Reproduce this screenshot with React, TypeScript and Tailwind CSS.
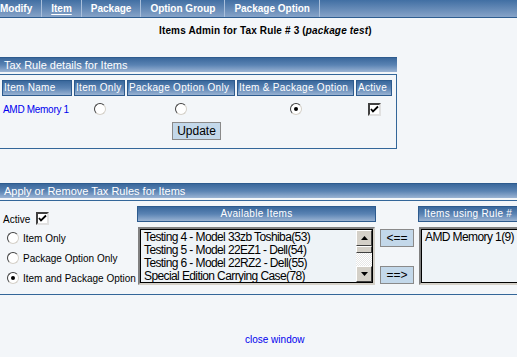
import React from "react";

const bar = "bg-gradient-to-b from-[#3a689c] via-[#5a83b3] to-[#9ab3d3]";

function Radio({ checked }: { checked?: boolean }) {
  return (
    <span className="inline-flex w-[12px] h-[12px] rounded-full bg-white border border-t-[#404040] border-l-[#404040] border-r-[#d4d0c8] border-b-[#d4d0c8] items-center justify-center">
      {checked && <span className="w-[4px] h-[4px] rounded-full bg-black" />}
    </span>
  );
}

function Check() {
  return (
    <span className="inline-flex w-[13px] h-[13px] bg-white border-2 border-t-[#404040] border-l-[#404040] border-r-[#e0e0e0] border-b-[#e0e0e0] items-center justify-center">
      <svg width="9" height="9" viewBox="0 0 9 9">
        <path d="M1 4 L3 6.5 L8 1.5" stroke="black" strokeWidth="1.8" fill="none" />
      </svg>
    </span>
  );
}

function HeadCell({ children, w }: { children: React.ReactNode; w: string }) {
  return (
    <div className={`${w} h-[16px] ${bar} border border-[#2d5b8e] text-white text-[10px] leading-[14px] px-[1px] whitespace-nowrap tracking-[0.3px] overflow-hidden`}>
      {children}
    </div>
  );
}

function Btn({ children, w }: { children: React.ReactNode; w: string }) {
  return (
    <div className={`${w} h-[18px] bg-[#c3d8ea] border border-[#8a8a8a] text-[12px] leading-[16px] text-center text-black`}>
      {children}
    </div>
  );
}

const cols = ["w-[70px]", "w-[51px]", "w-[108px]", "w-[117px]", "w-[36px]"];

export default function App() {
  const nav = ["Modify", "Item", "Package", "Option Group", "Package Option"];
  return (
    <div className="w-[517px] h-[357px] overflow-hidden bg-[#f3f6f9] text-black" style={{ fontFamily: '"Liberation Sans", Arial, sans-serif' }}>
      {/* top nav */}
      <div className="h-[18px] bg-gradient-to-b from-[#416fa3] to-[#86a3c8] border-b border-[#2e5d90] flex items-center -ml-[9px]">
        {nav.map((n, i) => (
          <div key={i} className="flex items-center h-full border-r border-[#a9bfdb]">
            <span className={`px-[9px] text-[10px] font-bold text-white ${n === "Item" ? "underline underline-offset-2" : ""}`}>{n}</span>
          </div>
        ))}
      </div>

      {/* title */}
      <div className="pl-[159px] pt-[6px] text-[10px] font-bold leading-[14px] tracking-[0.15px]">
        Items Admin for Tax Rule # 3 (<i>package test</i>)
      </div>

      {/* section 1 */}
      <div className="mt-[19px] w-[397px]">
        <div className={`h-[15px] ${bar} border-t border-[#2d5b8e] text-white text-[11px] leading-[14px] pl-[4px]`}>Tax Rule details for Items</div>
        <div className="mt-[2px] h-[75px] border border-[#336699] border-l-0">
          <div className="flex gap-[2px] pl-[2px] pt-[5px]">
            <HeadCell w={cols[0]}>Item Name</HeadCell>
            <HeadCell w={cols[1]}>Item Only</HeadCell>
            <HeadCell w={cols[2]}>Package Option Only</HeadCell>
            <HeadCell w={cols[3]}>Item &amp; Package Option</HeadCell>
            <HeadCell w={cols[4]}>Active</HeadCell>
          </div>
          <div className="flex gap-[2px] items-center h-[26px] pl-[2px]">
            <span className={`${cols[0]} pl-[1px] text-[10px] tracking-[-0.3px] text-[#0000ee] whitespace-nowrap`}>AMD Memory 1</span>
            <span className={`${cols[1]} flex justify-center`}><Radio /></span>
            <span className={`${cols[2]} flex justify-center`}><Radio /></span>
            <span className={`${cols[3]} flex justify-center`}><Radio checked /></span>
            <span className={`${cols[4]} flex justify-center`}><Check /></span>
          </div>
          <div className="pl-[172px]">
            <Btn w="w-[49px]">Update</Btn>
          </div>
        </div>
      </div>

      {/* section 2 */}
      <div className="mt-[34px]">
        <div className={`h-[15px] ${bar} border-t border-[#2d5b8e] text-white text-[11px] leading-[14px] pl-[4px]`}>Apply or Remove Tax Rules for Items</div>
        <div className="mt-[2px] h-[95px] border-t border-b border-[#336699] flex">
          <div className="w-[137px] shrink-0 pt-[10px] text-[10px] whitespace-nowrap">
            <div className="flex items-end gap-[6px] pl-[3px] h-[14px]">
              <span className="leading-[11px]">Active</span>
              <Check />
            </div>
            <div className="flex flex-col gap-[8px] mt-[7px] pl-[7px]">
              <div className="flex items-center gap-[4px] h-[12px]"><Radio /><span>Item Only</span></div>
              <div className="flex items-center gap-[4px] h-[12px]"><Radio /><span>Package Option Only</span></div>
              <div className="flex items-center gap-[4px] h-[12px]"><Radio checked /><span>Item and Package Option</span></div>
            </div>
          </div>
          <div className="pt-[5px] shrink-0">
            <div className={`w-[239px] h-[16px] ${bar} border border-[#2d5b8e] text-white text-[10px] tracking-[0.3px] leading-[14px] text-center`}>Available Items</div>
            <div className="mt-[5px] ml-[1px] w-[237px] h-[58px] bg-[#eef3f7] border-2 border-t-[#808080] border-l-[#808080] border-r-[#d4d0c8] border-b-[#d4d0c8] flex">
              <div className="flex-1 text-[12px] tracking-[-0.6px] leading-[13px] pl-[3px] pt-[1px] whitespace-nowrap overflow-hidden border border-black border-r-0">
                <div>Testing 4 - Model 33zb Toshiba(53)</div>
                <div>Testing 5 - Model 22EZ1 - Dell(54)</div>
                <div>Testing 6 - Model 22RZ2 - Dell(55)</div>
                <div>Special Edition Carrying Case(78)</div>
              </div>
              <div className="w-[17px] flex flex-col bg-[repeating-conic-gradient(#e6e6e6_0%_25%,#ffffff_0%_50%)] bg-[length:2px_2px] border border-black border-l-0">
                <div className="h-[16px] bg-[#d4d0c8] border border-t-white border-l-white border-r-[#404040] border-b-[#404040] flex items-center justify-center">
                  <svg width="7" height="4" viewBox="0 0 7 4"><path d="M3.5 0 L7 4 L0 4Z" fill="black" /></svg>
                </div>
                <div className="h-[7px] bg-[#d4d0c8] border border-t-white border-l-white border-r-[#404040] border-b-[#404040]" />
                <div className="flex-1" />
                <div className="h-[16px] bg-[#d4d0c8] border border-t-white border-l-white border-r-[#404040] border-b-[#404040] flex items-center justify-center">
                  <svg width="7" height="4" viewBox="0 0 7 4"><path d="M0 0 L7 0 L3.5 4Z" fill="black" /></svg>
                </div>
              </div>
            </div>
          </div>
          <div className="pl-[4px] pt-[28px] flex flex-col gap-[19px] shrink-0">
            <Btn w="w-[34px]">&lt;==</Btn>
            <Btn w="w-[34px]">==&gt;</Btn>
          </div>
          <div className="pl-[4px] pt-[5px] shrink-0">
            <div className={`w-[110px] h-[16px] ${bar} border border-[#2d5b8e] text-white text-[10px] tracking-[0.3px] leading-[14px] pl-[5px] whitespace-nowrap`}>Items using Rule #</div>
            <div className="mt-[5px] ml-[1px] w-[110px] h-[58px] bg-[#eef3f7] border-2 border-t-[#808080] border-l-[#808080] border-r-[#d4d0c8] border-b-[#d4d0c8]">
              <div className="h-full border border-black text-[12px] tracking-[-0.6px] leading-[13px] pl-[3px] pt-[1px]">AMD Memory 1(9)</div>
            </div>
          </div>
        </div>
      </div>

      <div className="mt-[37px] pl-[245px] text-[10px] text-[#0000ee]">close window</div>
    </div>
  );
}
